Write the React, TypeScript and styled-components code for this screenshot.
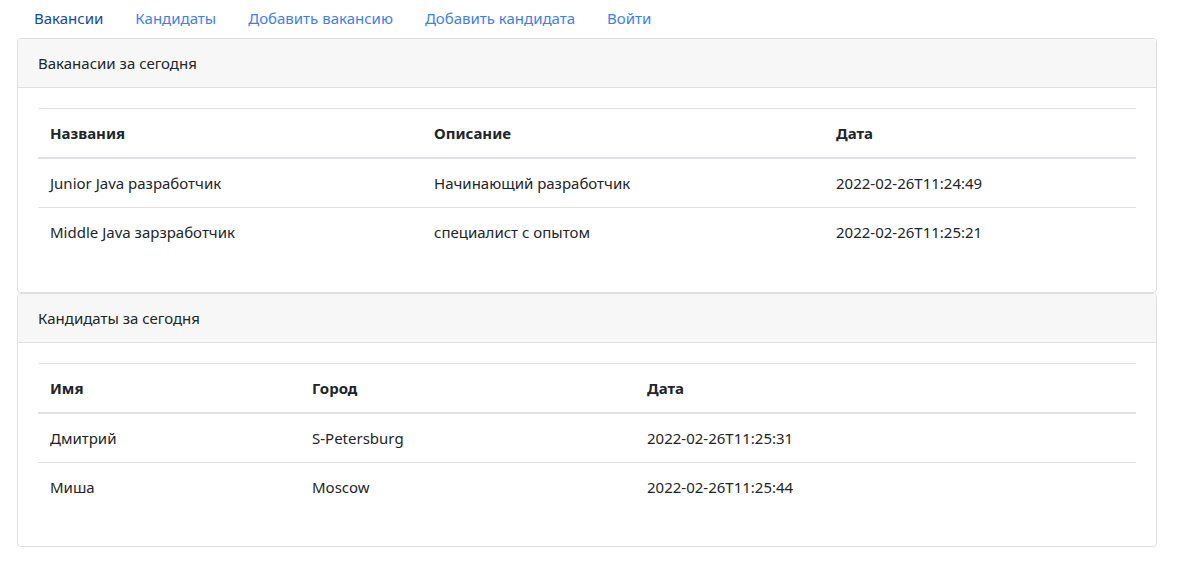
import React from "react";
import styled, { createGlobalStyle } from "styled-components";

const GlobalStyle = createGlobalStyle`
  html, body {
    margin: 0;
    padding: 0;
    background: #fff;
  }
  body {
    font-family: "Segoe UI", "Noto Sans", "Open Sans", sans-serif;
    font-size: 16px;
    line-height: 1.5;
    color: #212529;
  }
  * {
    box-sizing: border-box;
  }
`;

const Page = styled.div`
  width: 1140px;
  margin-left: 17px;
`;

//top navigation with links
const Nav = styled.ul`
  display: flex;
  list-style: none;
  margin: 0 0 0 1px;
  padding: 0;
  height: 38px;
  align-items: flex-start;
`;

const NavLink = styled.a<{ $active?: boolean }>`
  display: block;
  padding: 7px 16px 8px 16px;
  font-size: 15px;
  color: ${(p) => (p.$active ? "#0f4aa8" : "#3d7ef0")};
  text-decoration: none;
  cursor: pointer;
  &:hover {
    color: #0056b3;
  }
`;

const Card = styled.section`
  border: 1px solid #dfdfdf;
  border-radius: 4px;
  background: #fff;
`;

const CardHeader = styled.div`
  padding: 12px 20px;
  height: 49px;
  font-size: 15px;
  line-height: 24px;
  background: #f7f7f7;
  border-bottom: 1px solid #dfdfdf;
  border-radius: 3px 3px 0 0;
`;

const CardBody = styled.div`
  padding: 20px 20px 19px;
`;

const Table = styled.table`
  width: 100%;
  border-collapse: collapse;
  margin-bottom: 16px;
  font-size: 15px;
  table-layout: fixed;
`;

const Th = styled.th<{ $width: number }>`
  width: ${(p) => p.$width}px;
  text-align: left;
  font-weight: 700;
  padding: 12px;
  height: 49px;
  line-height: 24px;
  border-top: 1px solid #dee2e6;
  border-bottom: 2px solid #dee2e6;
`;

const Td = styled.td`
  padding: 12px;
  height: 49px;
  line-height: 24px;
  border-top: 1px solid #dee2e6;
`;

type Section = {
  title: string;
  columns: { name: string; width: number }[];
  rows: string[][];
};

const sections: Section[] = [
  {
    title: "Ваканасии за сегодня",
    columns: [
      { name: "Названия", width: 384 },
      { name: "Описание", width: 402 },
      { name: "Дата", width: 312 },
    ],
    rows: [
      ["Junior Java разработчик", "Начинающий разработчик", "2022-02-26T11:24:49"],
      ["Middle Java зарзработчик", "специалист с опытом", "2022-02-26T11:25:21"],
    ],
  },
  {
    title: "Кандидаты за сегодня",
    columns: [
      { name: "Имя", width: 262 },
      { name: "Город", width: 335 },
      { name: "Дата", width: 501 },
    ],
    rows: [
      ["Дмитрий", "S-Petersburg", "2022-02-26T11:25:31"],
      ["Миша", "Moscow", "2022-02-26T11:25:44"],
    ],
  },
];

const links = [
  "Вакансии",
  "Кандидаты",
  "Добавить вакансию",
  "Добавить кандидата",
  "Войти",
];

function App() {
  return (
    <Page>
      <GlobalStyle />
      <Nav>
        {links.map((l, i) => (
          <li key={l}>
            <NavLink $active={i === 0}>{l}</NavLink>
          </li>
        ))}
      </Nav>
      {sections.map((s) => (
        <Card key={s.title}>
          <CardHeader>{s.title}</CardHeader>
          <CardBody>
            <Table>
              <thead>
                <tr>
                  {s.columns.map((c) => (
                    <Th key={c.name} $width={c.width}>
                      {c.name}
                    </Th>
                  ))}
                </tr>
              </thead>
              <tbody>
                {s.rows.map((r) => (
                  <tr key={r[0]}>
                    {r.map((cell, i) => (
                      <Td key={i}>{cell}</Td>
                    ))}
                  </tr>
                ))}
              </tbody>
            </Table>
          </CardBody>
        </Card>
      ))}
    </Page>
  );
}

export default App;
